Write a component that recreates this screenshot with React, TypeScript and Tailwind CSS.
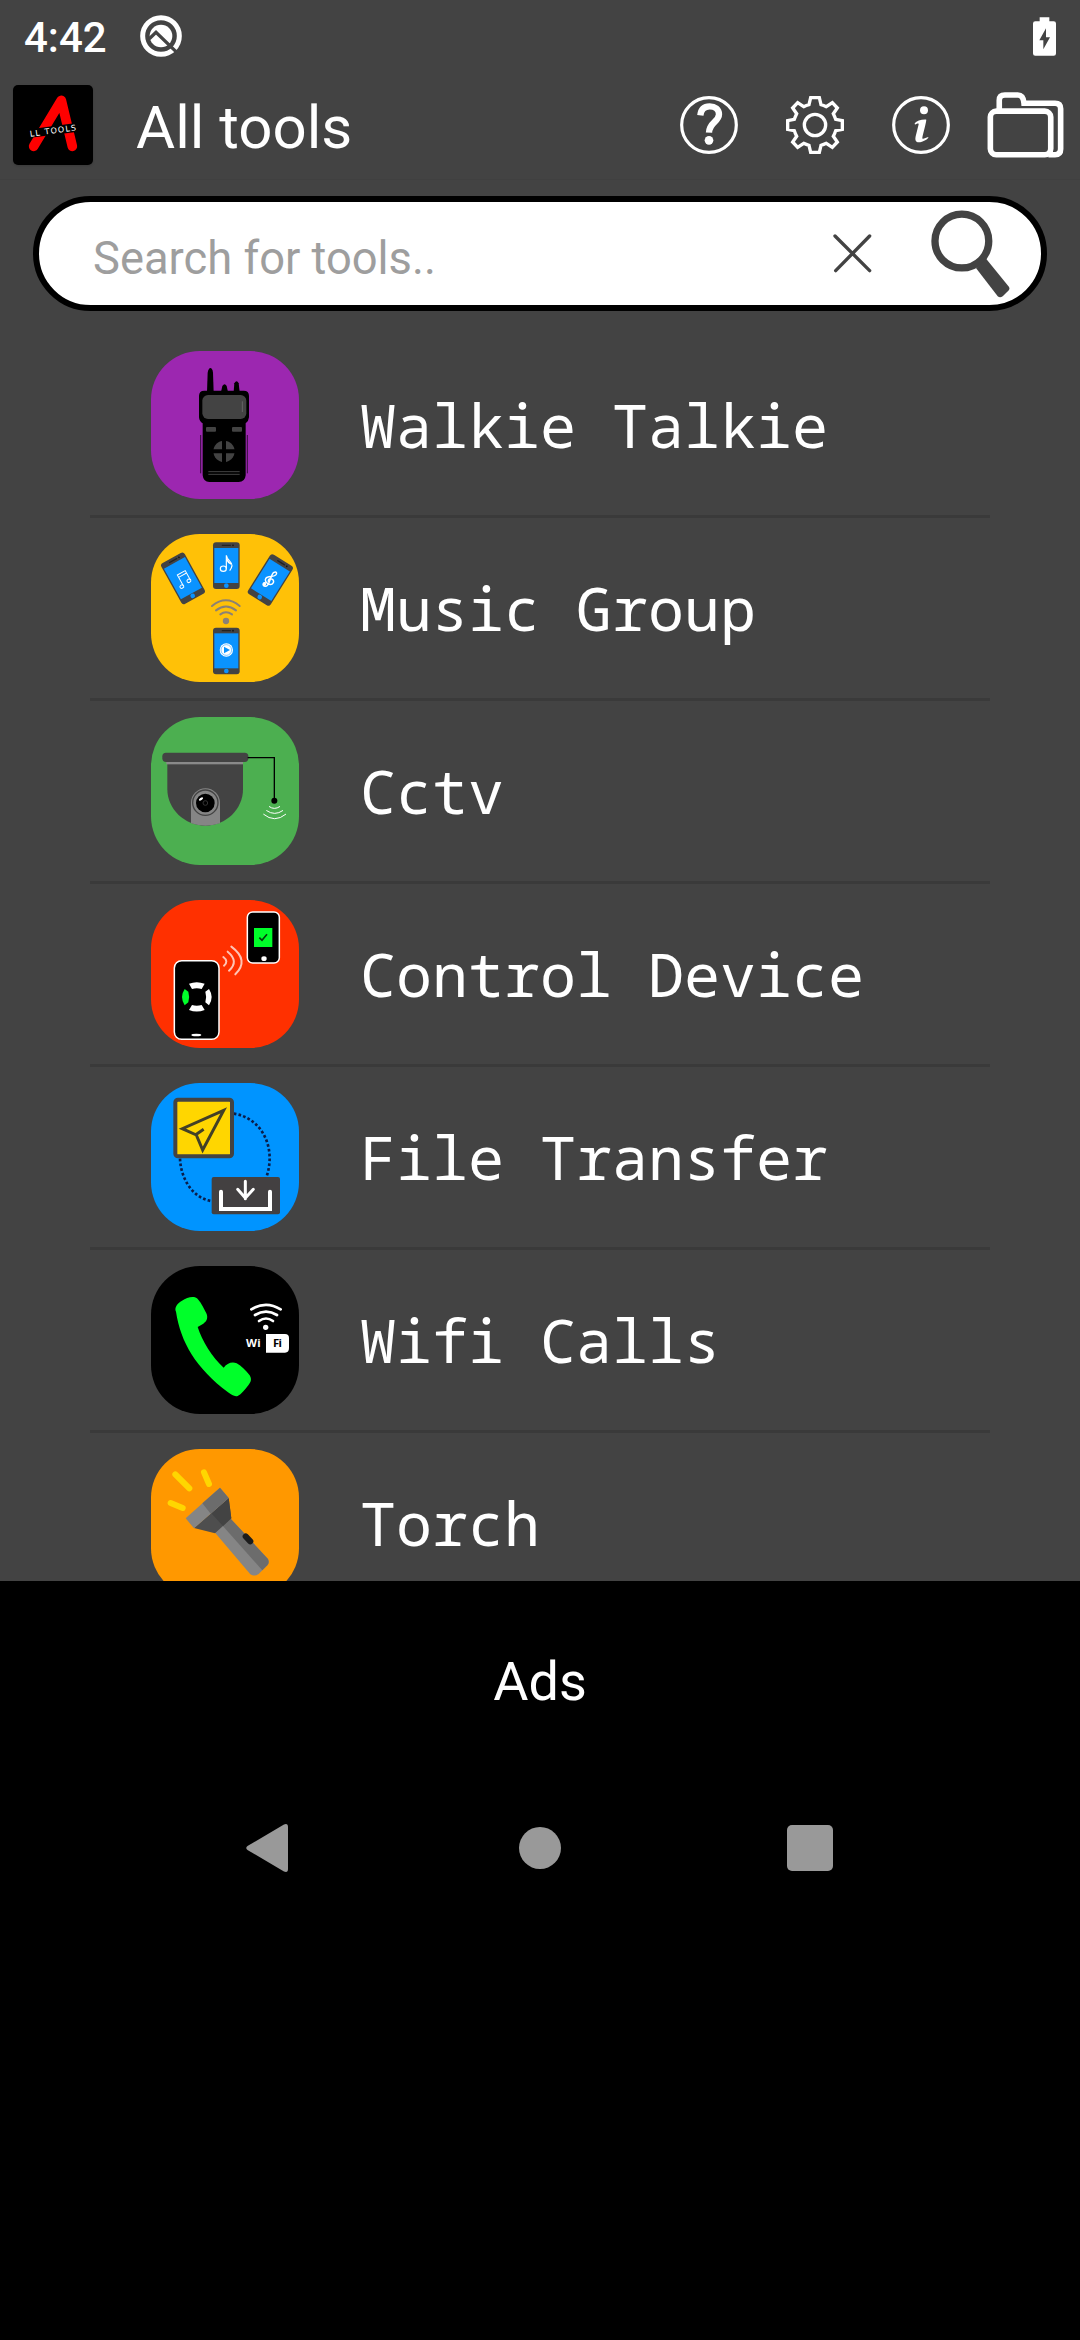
import type { ReactNode } from "react";

/* ---------- tool tiles ---------- */

function Tile({ box, color, children }: { box: string; color: string; children: ReactNode }) {
  const y = Number(box.split(" ")[1]);
  return (
    <svg viewBox={box} className="block h-[148px] w-[148px] shrink-0">
      <rect x={33} y={y} width={444} height={444} rx={146} fill={color} />
      {children}
    </svg>
  );
}

function WalkieTalkie() {
  return (
    <Tile box="33 33 444 444" color="#9c27b0">
      <path d="M201 156 L203 98 Q206 84 211 84 Q217 84 219 98 L221 156Z" />
      <path d="M243 156 L247 138 Q254 127 260 138 L264 156Z" />
      <path d="M281 156 L283 130 Q290 117 296 130 L299 156Z" />
      <path d="M193 152 H311 Q327 152 327 168 V232 Q326 244 317 250 V406 Q315 426 296 426 H208 Q190 426 188 406 V250 Q178 244 177 232 V168 Q177 152 193 152Z" />
      <rect x={187} y={165} width={132} height={72} rx={17} fill="#434343" />
      <path d="M307 184 V216" stroke="#777" strokeWidth={2} />
      <rect x={198} y={261} width={30} height={14} rx={3} fill="#434343" />
      <rect x={276} y={261} width={30} height={14} rx={3} fill="#434343" />
      <circle cx={252} cy={334} r={32} fill="#434343" />
      <path d="M252 300 V368 M218 334 H286" stroke="#000" strokeWidth={12} />
      <path d="M205 395 H299 M205 403 H299" stroke="#434343" strokeWidth={3} />
      <path d="M182 285 V400 M322 285 V400" stroke="#000" strokeWidth={2} />
    </Tile>
  );
}

function Phone({ transform, children }: { transform: string; children: ReactNode }) {
  return (
    <g transform={transform}>
      <rect x={-40} y={-70} width={80} height={140} rx={9} fill="#434343" />
      <rect x={-36} y={-53} width={72} height={105} fill="#0a93ff" />
      <path d="M-12 -61 H12" stroke="#222" strokeWidth={4} strokeLinecap="round" />
      <circle cx={20} cy={-61} r={2.5} fill="#111" />
      <circle cx={0} cy={60} r={7} fill="#0a93ff" />
      {children}
    </g>
  );
}

function MusicGroup() {
  return (
    <Tile box="33 30 444 444" color="#ffc107">
      <Phone transform="translate(129 163) rotate(-29)">
        <g fill="none" stroke="#fff" strokeWidth={3}>
          <path d="M-10 20 V-17 H17 V15 M-10 -9 H17" />
          <ellipse cx={-15} cy={20} rx={6} ry={5} />
          <ellipse cx={12} cy={15} rx={6} ry={5} />
        </g>
      </Phone>
      <Phone transform="translate(259 125)">
        <g fill="none" stroke="#fff" strokeWidth={3.5}>
          <ellipse cx={-9} cy={9} rx={9} ry={8} />
          <path d="M0 9 V-31 C2 -16 18 -12 17 0 Q16 8 10 15" />
          <path d="M1 -20 Q5 -9 15 -5" strokeWidth={5} />
        </g>
      </Phone>
      <Phone transform="translate(391 168) rotate(32)">
        <g fill="none" stroke="#fff" strokeWidth={4.5}>
          <path d="M-3 24 C-12 29 -16 16 -8 15 M-3 24 C3 22 2 17 1 10 L-4 -17 C-6 -27 5 -34 6 -24 C7 -11 -14 -9 -14 3 C-14 17 12 16 12 3 C12 -8 -6 -7 -5 3 Q-4 7 0 8" />
        </g>
        <circle cx={-8} cy={20} r={5} fill="#fff" />
      </Phone>
      <Phone transform="translate(259 381)">
        <circle r={20} fill="#fff" cy={-3} />
        <circle r={16} cy={-3} fill="none" stroke="#0a93ff" strokeWidth={1.5} />
        <path d="M-7 -13 L11 -3 L-7 7Z" fill="#0a93ff" />
      </Phone>
      <g fill="none" stroke="#8b8175" strokeWidth={6} strokeLinecap="round">
        <path d="M216 246 Q258 212 299 246" />
        <path d="M228 259 Q258 236 288 259" />
        <path d="M241 271 Q258 259 276 271" />
      </g>
      <circle cx={258} cy={291} r={9.5} fill="#8b8175" />
    </Tile>
  );
}

function Cctv() {
  return (
    <Tile box="33 33 444 444" color="#4caf50">
      <path d="M82 174 H309 V250 C309 310 258 359 196 359 C134 359 82 310 82 250Z" fill="#434343" />
      <rect x={79} y={167} width={230} height={8} fill="#8a8a8a" />
      <rect x={67} y={140} width={258} height={28} rx={11} fill="#434343" />
      <path d="M153 290 A43 43 0 0 1 240 290 V352 Q196 366 153 352Z" fill="#858585" />
      <circle cx={196} cy={290} r={38} fill="none" stroke="#434343" strokeWidth={4} />
      <circle cx={196} cy={291} r={28} fill="#000" />
      <circle cx={196} cy={291} r={7} fill="none" stroke="#333" strokeWidth={3} />
      <ellipse cx={183} cy={279} rx={7} ry={3.5} fill="#fff" transform="rotate(-30 183 279)" />
      <path d="M323 155 H403 V280" fill="none" stroke="#000" strokeWidth={4} />
      <circle cx={403} cy={284} r={9} />
      <g fill="none" stroke="#fff" strokeWidth={3} strokeLinecap="round">
        <path d="M388 302 Q403 313 419 302" />
        <path d="M380 314 Q404 331 428 314" />
        <path d="M371 325 Q404 352 437 325" />
      </g>
    </Tile>
  );
}

function ControlDevice() {
  return (
    <Tile box="33 30 444 444" color="#ff3000">
      <rect x={322} y={66} width={96} height={153} rx={16} fill="#000" stroke="#fff" strokeWidth={4.5} />
      <rect x={342} y={114} width={55} height={57} fill="#00ff2a" />
      <path d="M358 143 L366 151 L381 133" fill="none" stroke="#063b0c" strokeWidth={5} />
      <ellipse cx={372} cy={206} rx={8} ry={7} fill="#fff" />
      <rect x={103} y={212} width={134} height={236} rx={22} fill="#000" stroke="#fff" strokeWidth={4.5} />
      <g fill="#fff">
        <path d="M147 281 Q170 272 194 281 L185 297 Q170 292 156 297Z" />
        <path d="M147 360 Q170 369 194 360 L185 345 Q170 350 156 345Z" />
        <path d="M207 297 Q223 321 207 346 L196 337 Q201 321 196 305Z" />
      </g>
      <path d="M134 297 Q118 321 134 346 L145 337 Q150 321 145 305Z" fill="#00ff2a" />
      <ellipse cx={169} cy={435} rx={15} ry={4} fill="#fff" />
      <g fill="none" stroke="#ffc4b5" strokeWidth={6} strokeLinecap="round">
        <path d="M250 201 Q267 214 252 227" />
        <path d="M263 185 Q298 214 267 242" />
        <path d="M274 170 Q329 211 286 253" />
      </g>
    </Tile>
  );
}

function FileTransfer() {
  return (
    <Tile box="33 33 444 444" color="#0094ff">
      <path
        d="M281 125 C365 137 409 226 380 313 M120 260 C122 318 157 377 212 387"
        fill="none"
        stroke="#0a1d4a"
        strokeWidth={8}
        strokeDasharray="8 6.5"
      />
      <rect x={106} y={83} width={170} height={170} rx={8} fill="#ffd600" stroke="#434343" strokeWidth={12} />
      <path
        d="M251 115 L127 170 L169 189 L188 234Z M167 188 L191 172"
        fill="none"
        stroke="#434026"
        strokeWidth={9}
      />
      <rect x={215} y={315} width={205} height={112} rx={6} fill="#434041" />
      <g fill="none" stroke="#fff" strokeLinecap="round">
        <path d="M243 359 V411 H390 V359" strokeWidth={12} />
        <path d="M316 328 V380 M293 352 L316 378 L340 352" strokeWidth={9} />
      </g>
    </Tile>
  );
}

function WifiCalls() {
  return (
    <Tile box="33 33 444 444" color="#000">
      <path
        d="M108 170 C102 158 112 145 126 137 C140 128 160 121 171 130 C180 138 190 157 199 175 C206 190 198 201 190 206 L173 216 C186 258 217 307 251 338 C260 326 275 319 290 325 C304 333 318 346 329 361 C336 373 333 381 325 391 C315 404 304 418 293 423 C284 426 275 420 264 412 C168 339 122 262 108 170Z"
        fill="#00ff2a"
      />
      <g fill="none" stroke="#fff" strokeWidth={8} strokeLinecap="round">
        <path d="M334 163 Q378 136 422 163" />
        <path d="M345 180 Q378 160 411 180" />
        <path d="M357 198 Q378 183 399 198" />
      </g>
      <circle cx={377} cy={217} r={8} fill="#fff" />
      <path d="M378 237 H435 Q447 237 447 249 V279 Q447 293 435 293 H378Z" fill="#fff" />
      <text x={318} y={277} fontFamily="Noto Sans, sans-serif" fontWeight={700} fontSize={34} textLength={44} fill="#fff">
        Wi
      </text>
      <text x={399} y={277} fontFamily="Noto Sans, sans-serif" fontWeight={700} fontSize={34} textLength={27} fill="#000">
        Fi
      </text>
    </Tile>
  );
}

function Torch() {
  return (
    <Tile box="33 33 444 444" color="#ff9800">
      <g stroke="#ffd600" strokeWidth={18} strokeLinecap="round">
        <path d="M106 109 L148 151" />
        <path d="M192 103 L207 138" />
        <path d="M92 195 L128 210" />
      </g>
      <path d="M224 283 L272 242 L384 363 Q389 374 382 382 L356 408 Q343 417 331 409Z" fill="#858585" />
      <path d="M248 263 L272 242 L384 363 Q389 374 382 382 L367 397Z" fill="#6c6c6c" />
      <path d="M162 270 L266 180 L274 241 L225 286Z" fill="#4e4e4e" />
      <path d="M214 226 L266 180 L274 241 L249 264Z" fill="#434343" />
      <path d="M137 241 L240 149 L266 180 L162 271Z" fill="#858585" />
      <path d="M187 196 L240 149 L266 180 L212 227Z" fill="#6c6c6c" />
      <path d="M317 295 L331 310" stroke="#1c1c1c" strokeWidth={18} strokeLinecap="round" />
    </Tile>
  );
}

/* ---------- header drawings ---------- */

function AppLogo() {
  return (
    <svg viewBox="0 0 240 240" className="h-20 w-20 shrink-0 rounded-[5px] bg-black shadow">
      <path d="M62 184 L145 46 L178 184" fill="none" stroke="#f00" strokeWidth={29} strokeLinecap="round" strokeLinejoin="round" />
      <path d="M40 134 L195 113 V140 L40 160Z" fill="#000" />
      <text
        x={52}
        y={155}
        transform="rotate(-8 52 155)"
        fontFamily="DejaVu Sans, sans-serif"
        fontSize={24}
        textLength={139}
        fill="#fff"
      >
        LL TOOLS
      </text>
    </svg>
  );
}

function HelpIcon() {
  return (
    <svg viewBox="0 0 174 174" className="h-[58px] w-[58px]" fill="none" stroke="#fff">
      <circle cx={87} cy={87} r={82} strokeWidth={9.5} />
      <path d="M61 58 C63 38 75 31 89 31 C105 31 117 40 117 55 C117 78 88 78 87 110" strokeWidth={19} />
      <circle cx={87} cy={133} r={13} fill="#fff" stroke="none" />
    </svg>
  );
}

function GearIcon() {
  return (
    <svg viewBox="0 0 174 174" className="h-[58px] w-[58px]" fill="none" stroke="#fff" strokeWidth={10}>
      <path d="M74 5 H100 L105 26 Q113 28 121 32 L139 20 L154 36 L142 53 Q146 61 149 70 L169 74 V100 L149 104 Q146 113 142 121 L154 138 L139 154 L121 142 Q113 146 105 148 L100 169 H74 L69 148 Q61 146 53 142 L35 154 L20 138 L32 121 Q28 113 25 104 L5 100 V74 L25 70 Q28 61 32 53 L20 36 L35 20 L53 32 Q61 28 69 26Z" />
      <circle cx={87} cy={87} r={32} />
    </svg>
  );
}

function InfoIcon() {
  return (
    <svg viewBox="0 0 174 174" className="h-[58px] w-[58px]">
      <circle cx={87} cy={87} r={82} strokeWidth={9.5} fill="none" stroke="#fff" />
      <circle cx={96} cy={43} r={12} fill="#fff" />
      <path d="M68 82 C74 75 88 70 103 71 C101 88 93 112 91 125 C90 132 100 126 109 123 C111 128 92 139 80 139 C70 139 69 131 71 121 L80 85 C81 80 72 84 69 86Z" fill="#fff" />
    </svg>
  );
}

function FolderIcon() {
  return (
    <svg viewBox="0 0 231 200" className="h-[66px] w-[77px]" fill="none" stroke="#fff" strokeWidth={17}>
      <rect x={9} y={58} width={183} height={132} rx={18} />
      <path d="M36 58 V25 Q36 9 53 9 H92 Q109 9 111 34 H205 Q222 34 222 51 V173 Q222 190 205 190 H185" />
    </svg>
  );
}

function QIcon() {
  return (
    <svg viewBox="0 0 126 126" className="h-[42px] w-[42px]" fill="none">
      <circle cx={63} cy={63} r={55} stroke="#fff" strokeWidth={15} />
      <circle cx={63} cy={63} r={34} fill="#fff" />
      <path d="M28 71 L48 52 L108 110" stroke="#434343" strokeWidth={10} />
    </svg>
  );
}

function BatteryIcon() {
  return (
    <svg viewBox="0 0 69 116" className="h-[39px] w-[23px]">
      <path d="M20 0 H49 V12 H62 Q69 12 69 19 V109 Q69 116 62 116 H7 Q0 116 0 109 V19 Q0 12 7 12 H20Z" fill="#fff" />
      <path d="M39 33 L19 69 H31 V96 L51 60 H39Z" fill="#434343" />
    </svg>
  );
}

const tools: { name: string; icon: ReactNode }[] = [
  { name: "Walkie Talkie", icon: <WalkieTalkie /> },
  { name: "Music Group", icon: <MusicGroup /> },
  { name: "Cctv", icon: <Cctv /> },
  { name: "Control Device", icon: <ControlDevice /> },
  { name: "File Transfer", icon: <FileTransfer /> },
  { name: "Wifi Calls", icon: <WifiCalls /> },
  { name: "Torch", icon: <Torch /> },
];

export default function App() {
  return (
    <div className="flex h-[2340px] w-[1080px] flex-col overflow-hidden bg-black font-['Roboto',sans-serif] text-white">
      <main className="flex h-[1581px] flex-col overflow-hidden bg-[#434343]">
        <div className="flex h-[72px] shrink-0 items-center pr-[24px] pl-[24px]">
          <span className="mt-[3px] w-[116px] text-[42px] leading-none font-medium">4:42</span>
          <QIcon />
          <span className="ml-auto">
            <BatteryIcon />
          </span>
        </div>

        <header className="flex h-[108px] shrink-0 items-center border-b border-[#404040] pr-[16px] pb-px pl-[13px]">
          <AppLogo />
          <h1 className="mt-[5px] ml-[43px] text-[60px] leading-none">All tools</h1>
          <div className="ml-auto flex items-center">
            <HelpIcon />
            <span className="ml-12">
              <GearIcon />
            </span>
            <span className="ml-12">
              <InfoIcon />
            </span>
            <span className="ml-[37px]">
              <FolderIcon />
            </span>
          </div>
        </header>

        <div className="mx-[33px] mt-4 flex h-[115px] shrink-0 items-center rounded-full border-[6px] border-black bg-white pr-[31px] pl-[54px]">
          <span className="mt-[11px] text-[45.3px] leading-none text-[#9e9e9e]">Search for tools..</span>
          <svg viewBox="0 0 116 116" className="mr-[59px] ml-auto h-[39px] w-[39px]" stroke="#434343" strokeWidth={10} strokeLinecap="round">
            <path d="M6 6 L109 109 M109 6 L8 109" />
          </svg>
          <svg viewBox="0 0 238 264" className="h-[88px] w-[79px]">
            <circle cx={93} cy={93} r={81} fill="none" stroke="#434343" strokeWidth={22} />
            <path d="M136 175 L166 146 L234 230 Q239 237 233 243 L216 259 Q208 265 201 259Z" fill="#434343" />
          </svg>
        </div>

        <ul className="mt-[24px] flex shrink-0 flex-col px-[90px]">
          {tools.map((tool) => (
            <li key={tool.name} className="flex h-[183px] items-center gap-[61px] border-b-[3px] border-[#3a3a3a] pl-[61px]">
              {tool.icon}
              <span className="font-['Noto_Sans_Mono','DejaVu_Sans_Mono',monospace] text-[60px] leading-none whitespace-pre">
                {tool.name}
              </span>
            </li>
          ))}
        </ul>
      </main>

      <div className="flex h-[201px] shrink-0 items-center justify-center">
        <span className="text-[54px] leading-none">Ads</span>
      </div>

      <nav className="flex h-[132px] shrink-0 items-center justify-between pr-[247px] pl-[246px] text-[#999]">
        <svg viewBox="0 0 42 48" className="h-12 w-[42px]" fill="currentColor">
          <path d="M38 0.5 Q42 -1 42 3 V45 Q42 49 38 47.5 L1.500 26 Q-1 24 1.500 22Z" />
        </svg>
        <span className="ml-[5px] h-[42px] w-[42px] rounded-full bg-[#999]" />
        <span className="h-[46px] w-[46px] rounded-[5px] bg-[#999]" />
      </nav>
    </div>
  );
}
